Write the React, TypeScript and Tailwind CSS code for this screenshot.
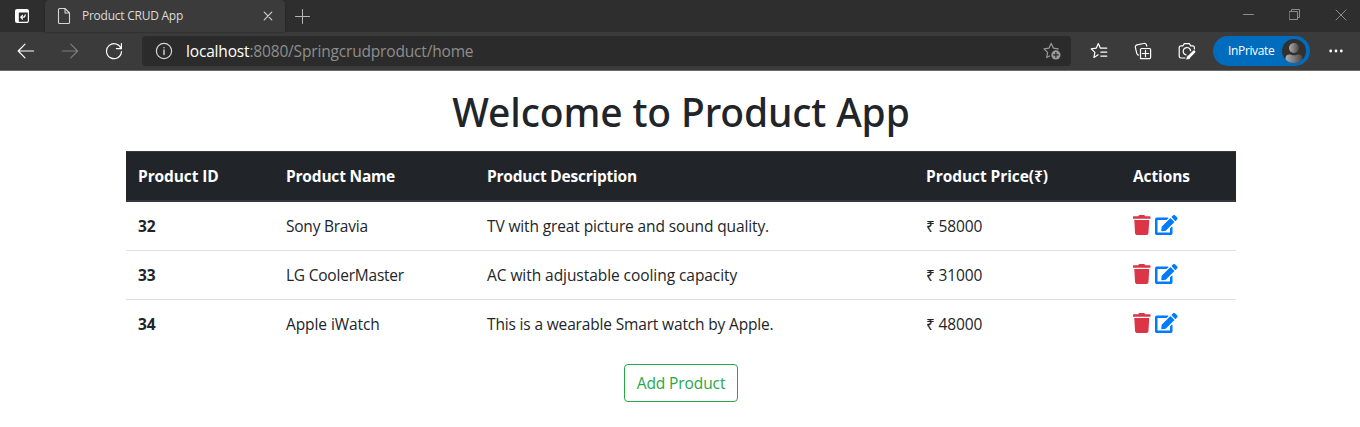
import React from "react";
import { FaEdit, FaTrash } from "react-icons/fa";

const products = [
  { id: 32, name: "Sony Bravia", nameCls: "tracking-[-0.23px]", description: "TV with great picture and sound quality.", descCls: "tracking-[-0.125px]", price: "₹ 58000" },
  { id: 33, name: "LG CoolerMaster", nameCls: "tracking-[-0.22px]", description: "AC with adjustable cooling capacity", descCls: "tracking-[-0.06px]", price: "₹ 31000" },
  { id: 34, name: "Apple iWatch", nameCls: "tracking-[-0.08px]", description: "This is a wearable Smart watch by Apple.", descCls: "tracking-[-0.16px]", price: "₹ 48000" },
];

function Icon({ className = "", size = 18, children }: { className?: string; size?: number; children: React.ReactNode }) {
  return (
    <svg
      width={size}
      height={size}
      viewBox={`0 0 ${size} ${size}`}
      fill="none"
      stroke="currentColor"
      strokeWidth="1.2"
      strokeLinecap="round"
      strokeLinejoin="round"
      className={`shrink-0 ${className}`}
    >
      {children}
    </svg>
  );
}

function TabStrip() {
  return (
    <div className="flex h-8 bg-[#2e2e2e]">
      <div className="flex w-[45px] items-center pl-[14px]">
        <Icon size={16} className="text-white">
          <rect x="1.6" y="1.6" width="12.8" height="12.8" rx="1.6" />
          <path d="M1.5 3.1a1.6 1.6 0 0 1 1.6-1.6h9.8a1.6 1.6 0 0 1 1.6 1.6V4.6H1.5z M1.5 4H4.8V14.5H3.1a1.6 1.6 0 0 1-1.6-1.6z" fill="currentColor" stroke="none" />
          <path d="M11.2 6.8L10.9 8A1.6 1.6 0 0 1 9.4 9.2H6.9M8.5 7.4L6.7 9.2L8.5 11" />
        </Icon>
      </div>
      <div className="flex w-60 items-center rounded-t-[4px] bg-[#3b3b3b] pl-[12px] shadow-[0_0_2px_#1c1c1c]">
        <svg width="14" height="18" viewBox="0 0 14 18" fill="none" stroke="currentColor" strokeWidth="1.1" strokeLinejoin="round" className="shrink-0 text-[#d6d6d6]">
          <path d="M2.5 1.5H8L12.5 6V15.5a1 1 0 0 1-1 1H2.5a1 1 0 0 1-1-1V2.5a1 1 0 0 1 1-1zM8 1.5V6H12.5" />
        </svg>
        <span className="ml-[11px] text-[12px] leading-4 tracking-[-0.25px] text-[#dcdcdc]">Product CRUD App</span>
        <Icon size={10} className="ml-auto mr-[12px] text-[#d0d0d0]">
          <path d="M1.2 1.2L8.8 8.8M8.8 1.2L1.2 8.8" />
        </Icon>
      </div>
      <div className="flex items-center pl-[10px]">
        <Icon size={15} className="text-[#b5b5b5]">
          <path d="M7.5 .5V14.5M.5 7.5H14.5" strokeWidth="1" />
        </Icon>
      </div>
      <div className="ml-auto flex h-[29px] items-center gap-[35px] pr-[13px] text-[#8c8c8c]">
        <Icon size={11}>
          <path d="M0.5 5.5H10.5" strokeWidth="1" />
        </Icon>
        <Icon size={11}>
          <path d="M.5 2.5H8.5V10.5H.5zM2.5 2.5V.5H10.5V8.5H8.5" strokeWidth="1" />
        </Icon>
        <Icon size={12}>
          <path d="M1 1L11 11M11 1L1 11" strokeWidth="1" />
        </Icon>
      </div>
    </div>
  );
}

function Toolbar() {
  return (
    <div className="flex h-[39px] items-center border-b border-[#6a6a6a] bg-[#3b3b3b] text-white">
      <div className="flex w-[142px] items-center pl-[17px]">
        <Icon>
          <path d="M16.6 9H1.2M8 2.2L1.2 9L8 15.8" />
        </Icon>
        <Icon className="ml-[26px] text-[#7c7c7c]">
          <path d="M1.2 9H16.6M9.8 2.2L16.6 9L9.8 15.8" />
        </Icon>
        <Icon className="ml-[26px]">
          <path d="M16.2 7A7.5 7.5 0 1 0 16.5 9.6M16.4 1.6V6.6H11.4" />
        </Icon>
      </div>
      <div className="flex h-[30px] w-[929px] items-center rounded-[4px] bg-[#2b2b2b] pl-[13px] pr-[10px]">
        <Icon className="text-[#d6d6d6]">
          <circle cx="9" cy="9" r="7.6" />
          <path d="M9 8V12.6M9 5.6V5.7" strokeWidth="1.4" />
        </Icon>
        <span className="ml-[13px] text-[15.5px] leading-5 tracking-[-0.17px] text-[#8e8e8e]">
          <span className="text-white">localhost</span>:8080/Springcrudproduct/home
        </span>
        <Icon className="ml-auto text-[#9a9a9a]">
          <path d="M6.5 14L3.7 15.6L4.6 10.4L1 6.9L6 6.1L8.2 1.5L10.4 6.1L15.2 6.9" />
          <circle cx="12.9" cy="12.9" r="4.6" fill="currentColor" stroke="none" />
          <path d="M12.9 10.6V15.2M10.6 12.9H15.2" stroke="#2b2b2b" />
        </Icon>
      </div>
      <Icon className="ml-[19px]">
        <path d="M8.2 12.8L3.9 15.4L4.9 10.4L1.2 6.9L6.2 6.2L8.3 1.6L10.3 6.1H16.8M10.8 10.1H16.8M10.8 14.1H16.8" />
      </Icon>
      <Icon className="ml-[26px]">
        <path d="M6.5 16.6V7.6a1.1 1.1 0 0 1 1.1-1.1H15.5a1.1 1.1 0 0 1 1.1 1.1V15.5a1.1 1.1 0 0 1-1.1 1.1H7.6a1.1 1.1 0 0 1-1.1-1.1M11.5 8.4V14.7M8.4 11.5H14.7" />
        <path d="M4.6 13.2a2.6 2.6 0 0 1-1.8-1.9L1.4 5.6A2.2 2.2 0 0 1 3 2.9L9.6 1.5A2.2 2.2 0 0 1 12.6 3.5L12.8 4.2" />
      </Icon>
      <Icon className="ml-[26px]">
        <path d="M7 16H3a1.8 1.8 0 0 1-1.8-1.8V5.6A1.8 1.8 0 0 1 3 3.8H5L6.3 1.6H11.3L12.6 3.8H14.6A1.8 1.8 0 0 1 16.4 5.6V7M8 12.8A3.7 3.7 0 1 1 12.6 8.6" />
        <path d="M16 9.8L10.8 15" strokeWidth="2.8" />
        <path d="M9.4 14.4L8.6 17.2L11.6 16.4z" fill="currentColor" strokeWidth=".6" />
      </Icon>
      <div className="ml-[17px] flex h-[30px] w-[97px] items-center rounded-full bg-[#006cbe] pl-[15px]">
        <span className="text-[12px] leading-4 tracking-[-0.35px]">InPrivate</span>
        <svg width="24" height="24" viewBox="0 0 24 24" className="ml-auto mr-[4px] shrink-0">
          <defs>
            <linearGradient id="person" x1="0" x2="1">
              <stop offset="0" stopColor="#b0aeac" />
              <stop offset="1" stopColor="#4a4846" />
            </linearGradient>
            <clipPath id="disc">
              <circle cx="12" cy="12" r="12" />
            </clipPath>
          </defs>
          <circle cx="12" cy="12" r="12" fill="#323130" />
          <g clipPath="url(#disc)" fill="url(#person)">
            <circle cx="12" cy="9" r="5" />
            <path d="M3.5 24V19.5a4 4 0 0 1 4-4c1.6 0 2.4 .8 4.5 .8s2.900-.8 4.500-.8a4 4 0 0 1 4 4V24z" />
          </g>
        </svg>
      </div>
      <svg width="14" height="4" viewBox="0 0 14 4" className="ml-[19px]" fill="currentColor">
        <circle cx="1.7" cy="2" r="1.4" />
        <circle cx="7" cy="2" r="1.4" />
        <circle cx="12.3" cy="2" r="1.4" />
      </svg>
    </div>
  );
}

export default function App() {
  return (
    <div className="h-[427px] w-[1360px] overflow-hidden bg-white font-['Open_Sans','Noto_Sans',sans-serif] text-[#212529]">
      <TabStrip />
      <Toolbar />
      <main className="ml-[126px] flex w-[1110px] flex-col items-center pt-[17px]">
        <h1 className="h-[63px] whitespace-nowrap font-['Noto_Sans','Open_Sans',sans-serif] text-[39px] font-medium leading-[48px] tracking-[-0.13px]">Welcome to Product App</h1>
        <table className="w-full table-fixed border-separate border-spacing-0 text-left text-[15.5px] leading-6">
          <colgroup>
            <col className="w-[148px]" />
            <col className="w-[201px]" />
            <col className="w-[439px]" />
            <col className="w-[207px]" />
            <col className="w-[115px]" />
          </colgroup>
          <thead>
            <tr className="h-[51px] bg-[#212529] text-white [&>th]:border-b-2 [&>th]:border-t [&>th]:border-b-[#32383e] [&>th]:border-t-[#32383e] [&>th]:px-3 [&>th]:py-0 [&>th]:font-bold">
              <th><span className="tracking-[-0.1px]">Product ID</span></th>
              <th><span className="tracking-[-0.2px]">Product Name</span></th>
              <th><span className="tracking-[-0.23px]">Product Description</span></th>
              <th><span className="tracking-[-0.07px]">Product Price(₹)</span></th>
              <th><span className="tracking-[-0.1px]">Actions</span></th>
            </tr>
          </thead>
          <tbody>
            {products.map((p) => (
              <tr key={p.id} className="h-[49px] whitespace-nowrap [&>*]:border-b [&>*]:border-[#dee2e6] [&>*]:px-3 [&>*]:py-0 last:[&>*]:border-transparent">
                <th className="font-bold">{p.id}</th>
                <td><span className={p.nameCls}>{p.name}</span></td>
                <td><span className={p.descCls}>{p.description}</span></td>
                <td><span className="tracking-[-0.15px]">{p.price}</span></td>
                <td>
                  <div className="flex gap-[4.5px] pb-[3px]">
                    <FaTrash className="h-5 w-[17.5px] text-[#dc3545]" />
                    <FaEdit className="h-5 w-[22.5px] text-[#007bff]" />
                  </div>
                </td>
              </tr>
            ))}
          </tbody>
        </table>
        <button className="mt-[15px] h-[38px] w-[114px] whitespace-nowrap rounded-[4px] border border-[#28a745] text-[15.5px] leading-6 text-[#28a745]">
          <span className="tracking-[-0.1px]">Add Product</span>
        </button>
      </main>
    </div>
  );
}
